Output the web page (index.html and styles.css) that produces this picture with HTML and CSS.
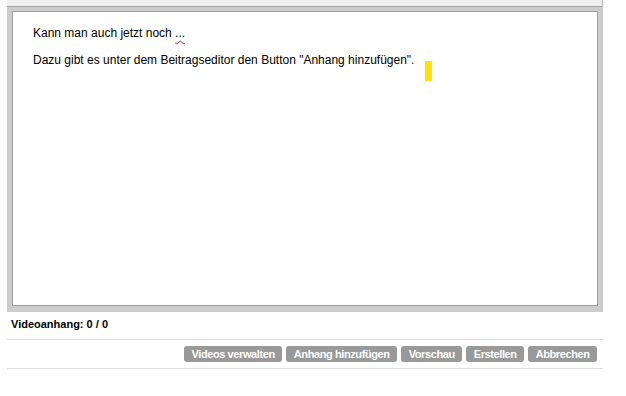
FILE: index.html
```html
<!DOCTYPE html>
<html lang="de">
<head>
<meta charset="utf-8">
<title>Beitrag erstellen</title>
<link rel="stylesheet" href="styles.css">
</head>
<body>
<div class="page">
  <div class="editor">
    <div class="toolbar"></div>
    <div class="textarea">
      <p>Kann man auch jetzt noch <span class="spell">...</span></p>
      <p>Dazu gibt es unter dem Beitragseditor den Button "Anhang hinzufügen".</p>
      <span class="marker"></span>
    </div>
  </div>
  <div class="video-line"><b>Videoanhang:</b> <b>0 / 0</b></div>
  <div class="actions">
    <button class="btn">Videos verwalten</button>
    <button class="btn">Anhang hinzufügen</button>
    <button class="btn">Vorschau</button>
    <button class="btn">Erstellen</button>
    <button class="btn">Abbrechen</button>
  </div>
</div>
</body>
</html>
```
FILE: styles.css
```css
html, body {
  margin: 0;
  padding: 0;
  background: #fff;
}
body {
  font-family: "Liberation Sans", Arial, sans-serif;
  color: #000;
}
.page {
  width: 596px;
  margin-left: 7px;
}
.editor {
  background: #cccccc;
  padding-bottom: 6px;
}
.toolbar {
  height: 6px;
  background: #f0f0f0;
  border-bottom: 1px solid #a6a6a6;
  border-right: 1px solid #b8b8b8;
}
.textarea {
  position: relative;
  margin: 4px 5px 0 5px;
  height: 279px;
  background: #fff;
  border: 1px solid #9e9e9e;
  padding: 14px 20px 0 20px;
  font-size: 12px;
  line-height: 15px;
}
.textarea p {
  margin: 0 0 12px 0;
}
.spell {
  text-decoration: underline wavy #e02020;
  text-decoration-thickness: 1px;
  text-underline-offset: 3px;
}
.marker {
  position: absolute;
  left: 412px;
  top: 49px;
  width: 7px;
  height: 20px;
  background: #fde300;
}
.video-line {
  padding: 6px 4px 8px 4px;
  font-size: 11px;
  line-height: 13px;
}
.actions {
  display: flex;
  justify-content: flex-end;
  gap: 4px;
  padding: 6px 6px 6px 0;
  border-top: 1px solid #dedede;
  border-bottom: 1px solid #dedede;
}
.btn {
  font-family: "Liberation Sans", Arial, sans-serif;
  font-size: 11px;
  font-weight: bold;
  letter-spacing: -0.4px;
  line-height: 16px;
  height: 16px;
  padding: 0 7.5px;
  border: 0;
  border-radius: 3px;
  background: #999999;
  color: #fff;
}
```
